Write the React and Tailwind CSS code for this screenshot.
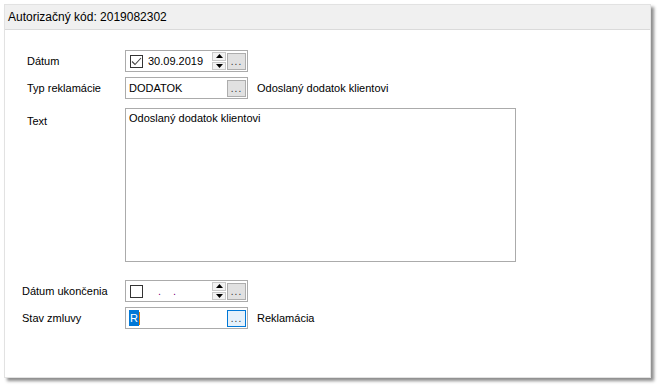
import React from 'react';

const font = { fontFamily: '"Liberation Sans", Arial, sans-serif' };

function DotsButton({ focused }) {
  return (
    <div
      className={
        'flex h-[17px] w-[19px] items-end justify-center border pb-[2px] text-[10px] leading-none ' +
        (focused ? 'border-[#0078d7] bg-[#e5f1fb]' : 'border-[#adadad] bg-[#e1e1e1]')
      }
    >
      <span className="tracking-[1px] text-[#333]">...</span>
    </div>
  );
}

function Spinner() {
  return (
    <div className="flex h-[18px] w-[14px] flex-col gap-[1px]">
      <div className="flex flex-1 items-center justify-center border border-[#c9c9c9] bg-[#f2f2f2]">
        <svg width="7" height="4" viewBox="0 0 7 4">
          <path d="M3.5 0L7 4H0z" fill="#000" />
        </svg>
      </div>
      <div className="flex flex-1 items-center justify-center border border-[#c9c9c9] bg-[#f2f2f2]">
        <svg width="7" height="4" viewBox="0 0 7 4">
          <path d="M0 0h7L3.5 4z" fill="#000" />
        </svg>
      </div>
    </div>
  );
}

function CheckBox({ checked }) {
  return (
    <div className="flex h-[13px] w-[13px] items-center justify-center border border-[#333] bg-white">
      {checked && (
        <svg width="11" height="9" viewBox="0 0 11 9">
          <path d="M1 4.5l3 3L10 1" fill="none" stroke="#444" strokeWidth="1.1" />
        </svg>
      )}
    </div>
  );
}

function Row({ label, indent, children, extra }) {
  return (
    <div className="flex h-[22px] items-center">
      <div className={'w-[120px] ' + indent}>{label}</div>
      {children}
      {extra && <span className="ml-[9px]">{extra}</span>}
    </div>
  );
}

export default function App() {
  return (
    <div className="h-[388px] w-[661px] bg-white pl-[4px] pt-[4px] text-[11px] text-black" style={font}>
      <div className="flex h-[374px] w-[647px] flex-col border border-[#e2e2e2] bg-white shadow-[3px_3px_3px_rgba(0,0,0,0.45)]">
        <div className="flex h-[25px] items-center border-b border-[#dadada] bg-[#f0f0f0] pl-[3px] text-[12px]">
          Autorizačný kód: 2019082302
        </div>

        <div className="flex flex-col pt-[20px]">
          <Row label="Dátum" indent="pl-[22px]">
            <div className="flex h-[22px] w-[123px] items-center border border-[#ababab] bg-white pl-[4px] pr-[1px]">
              <CheckBox checked />
              <span className="ml-[5px] flex-1 text-[11px]">30.09.2019</span>
              <Spinner />
              <div className="ml-[1px]">
                <DotsButton />
              </div>
            </div>
          </Row>

          <div className="mt-[5px]">
            <Row label="Typ reklamácie" indent="pl-[22px]" extra="Odoslaný dodatok klientovi">
              <div className="flex h-[22px] w-[123px] items-center border border-[#ababab] bg-white pl-[3px] pr-[1px]">
                <span className="flex-1">DODATOK</span>
                <DotsButton />
              </div>
            </Row>
          </div>

          <div className="mt-[9px] flex">
            <div className="w-[120px] pl-[22px] pt-[5px]">Text</div>
            <div className="h-[154px] w-[391px] border border-[#ababab] bg-white pl-[3px] pt-[1px]">
              Odoslaný dodatok klientovi
            </div>
          </div>

          <div className="mt-[18px]">
            <Row label="Dátum ukončenia" indent="pl-[17px]">
              <div className="flex h-[22px] w-[123px] items-center border border-[#ababab] bg-white pl-[4px] pr-[1px]">
                <CheckBox />
                <span className="ml-[15px] flex-1 text-[#800080]">
                  <span className="mr-[12px]">.</span>.
                </span>
                <Spinner />
                <div className="ml-[1px]">
                  <DotsButton />
                </div>
              </div>
            </Row>
          </div>

          <div className="mt-[5px]">
            <Row label="Stav zmluvy" indent="pl-[17px]" extra="Reklamácia">
              <div className="flex h-[22px] w-[123px] items-center border border-[#ababab] bg-white pl-[3px] pr-[1px]">
                <span className="flex flex-1 items-center">
                  <span className="bg-[#0078d7] px-[1px] text-white">R</span>
                  <span className="h-[13px] w-[1px] bg-[#f08000]" />
                </span>
                <DotsButton focused />
              </div>
            </Row>
          </div>
        </div>
      </div>
    </div>
  );
}
